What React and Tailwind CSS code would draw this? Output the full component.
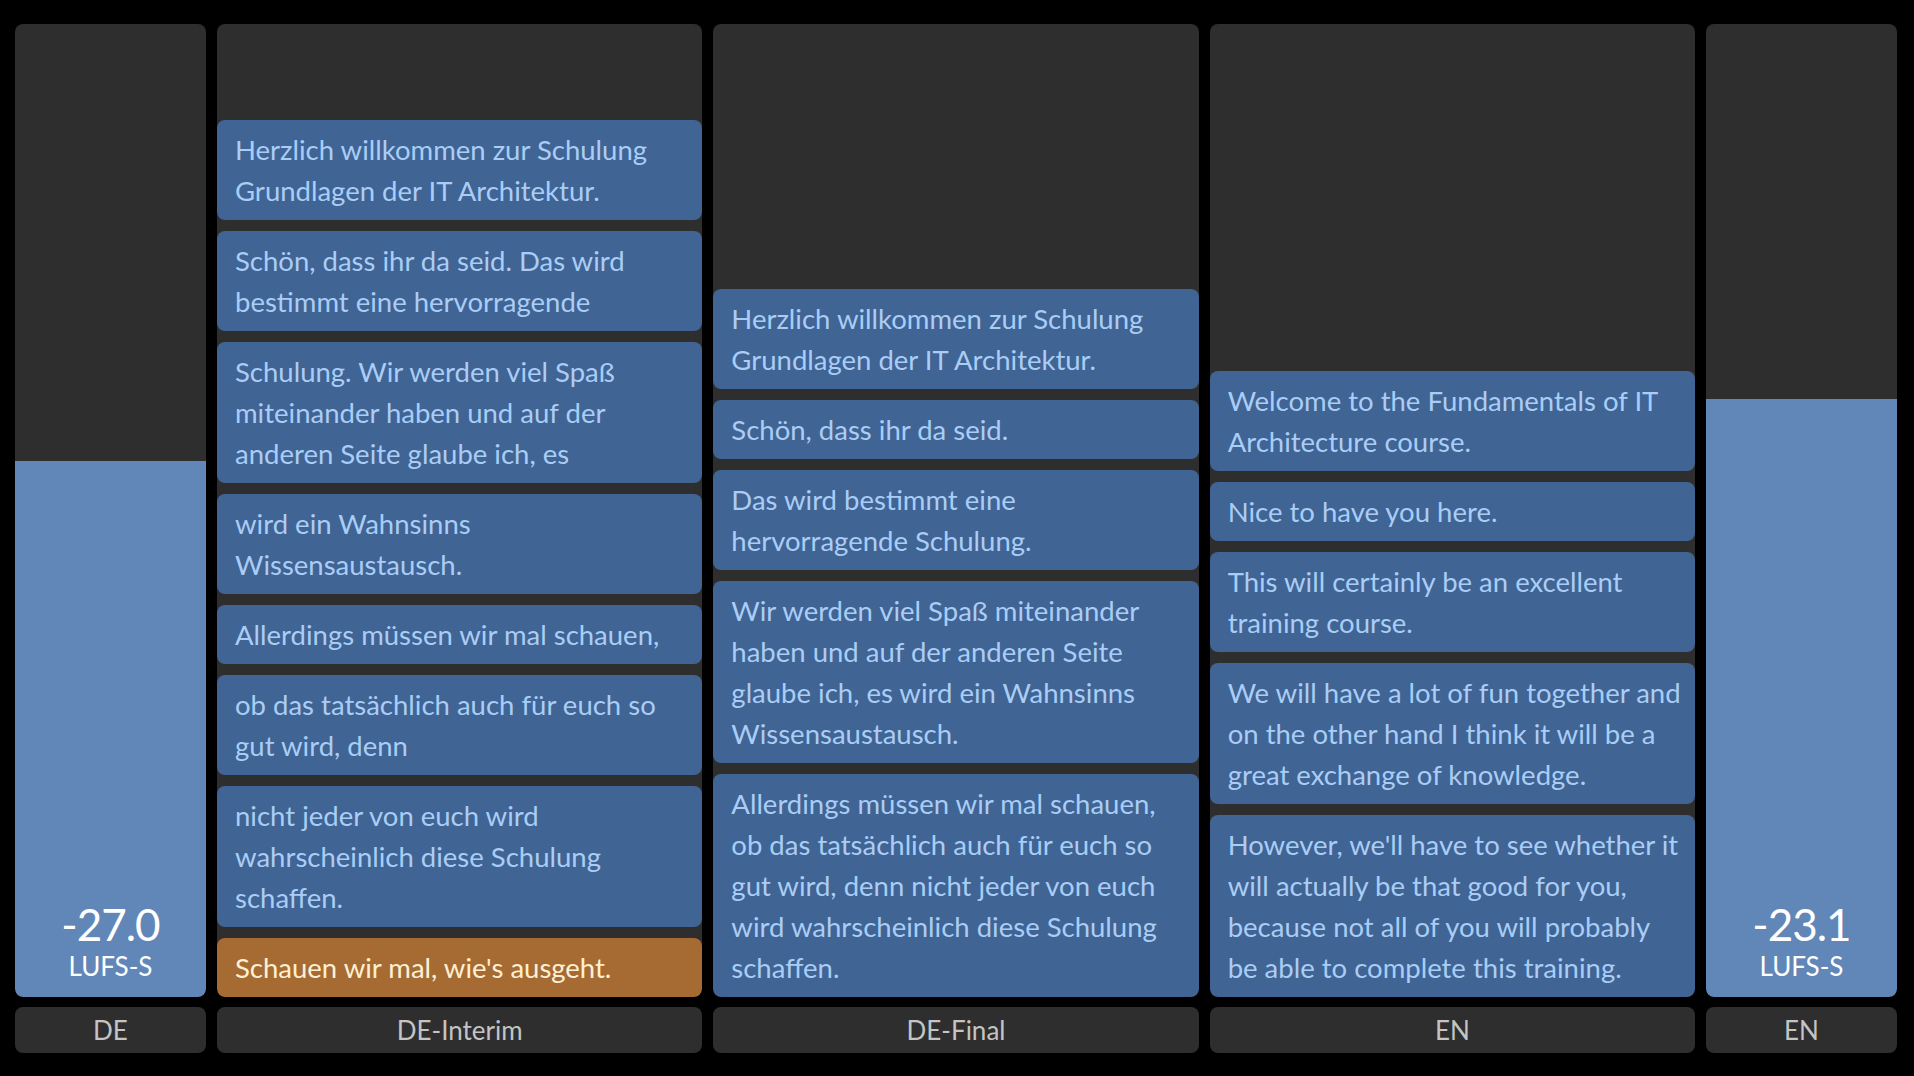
const interim = [
  ['Herzlich willkommen zur Schulung', 'Grundlagen der IT Architektur.'],
  ['Schön, dass ihr da seid. Das wird', 'bestimmt eine hervorragende'],
  ['Schulung. Wir werden viel Spaß', 'miteinander haben und auf der', 'anderen Seite glaube ich, es'],
  ['wird ein Wahnsinns', 'Wissensaustausch.'],
  ['Allerdings müssen wir mal schauen,'],
  ['ob das tatsächlich auch für euch so', 'gut wird, denn'],
  ['nicht jeder von euch wird', 'wahrscheinlich diese Schulung', 'schaffen.'],
];

const final = [
  ['Herzlich willkommen zur Schulung', 'Grundlagen der IT Architektur.'],
  ['Schön, dass ihr da seid.'],
  ['Das wird bestimmt eine', 'hervorragende Schulung.'],
  ['Wir werden viel Spaß miteinander', 'haben und auf der anderen Seite', 'glaube ich, es wird ein Wahnsinns', 'Wissensaustausch.'],
  ['Allerdings müssen wir mal schauen,', 'ob das tatsächlich auch für euch so', 'gut wird, denn nicht jeder von euch', 'wird wahrscheinlich diese Schulung', 'schaffen.'],
];

const english = [
  ['Welcome to the Fundamentals of IT', 'Architecture course.'],
  ['Nice to have you here.'],
  ['This will certainly be an excellent', 'training course.'],
  ['We will have a lot of fun together and', 'on the other hand I think it will be a', 'great exchange of knowledge.'],
  ["However, we'll have to see whether it", 'will actually be that good for you,', 'because not all of you will probably', 'be able to complete this training.'],
];

function Card({ lines, pending }) {
  return (
    <div className={`rounded-lg px-[18px] py-[9px] text-[27.5px] leading-[41px] whitespace-nowrap ${pending ? 'bg-[#a66b32] text-[#fdf0d4]' : 'bg-[#406494] text-[#aacdf6]'}`}>
      {lines.map((l, i) => <div key={i}>{l}</div>)}
    </div>
  );
}

function Transcript({ items, pending }) {
  return (
    <div className="bg-[#2e2e2e] rounded-lg flex flex-col justify-end gap-[11px] overflow-hidden">
      {items.map((lines, i) => <Card key={i} lines={lines} />)}
      {pending && <Card lines={[pending]} pending />}
    </div>
  );
}

function Meter({ value, fill }) {
  return (
    <div className="bg-[#2e2e2e] rounded-lg flex flex-col justify-end overflow-hidden">
      <div className="bg-[#6187b8] rounded-b-lg flex flex-col justify-end items-center pb-[14px] text-white" style={{ height: fill }}>
        <div className="text-[44px] leading-[50px] tracking-[-1px]">{value}</div>
        <div className="text-[26px] leading-[34px]">LUFS-S</div>
      </div>
    </div>
  );
}

function Label({ children }) {
  return (
    <div className="bg-[#2e2e2e] rounded-lg h-[46px] flex items-center justify-center text-[26px] text-[#c4c4c4]">
      {children}
    </div>
  );
}

export default function App() {
  return (
    <div className="w-[1914px] h-[1076px] bg-black pl-[15px] pr-[17px] pt-6 pb-[23px] grid grid-cols-[191px_1fr_1fr_1fr_191px] grid-rows-[1fr_46px] gap-x-[11px] gap-y-[10px]" style={{ fontFamily: 'Lato, "Noto Sans", sans-serif' }}>
      <Meter value="-27.0" fill={536} />
      <Transcript items={interim} pending="Schauen wir mal, wie's ausgeht." />
      <Transcript items={final} />
      <Transcript items={english} />
      <Meter value="-23.1" fill={598} />
      <Label>DE</Label>
      <Label>DE-Interim</Label>
      <Label>DE-Final</Label>
      <Label>EN</Label>
      <Label>EN</Label>
    </div>
  );
}
